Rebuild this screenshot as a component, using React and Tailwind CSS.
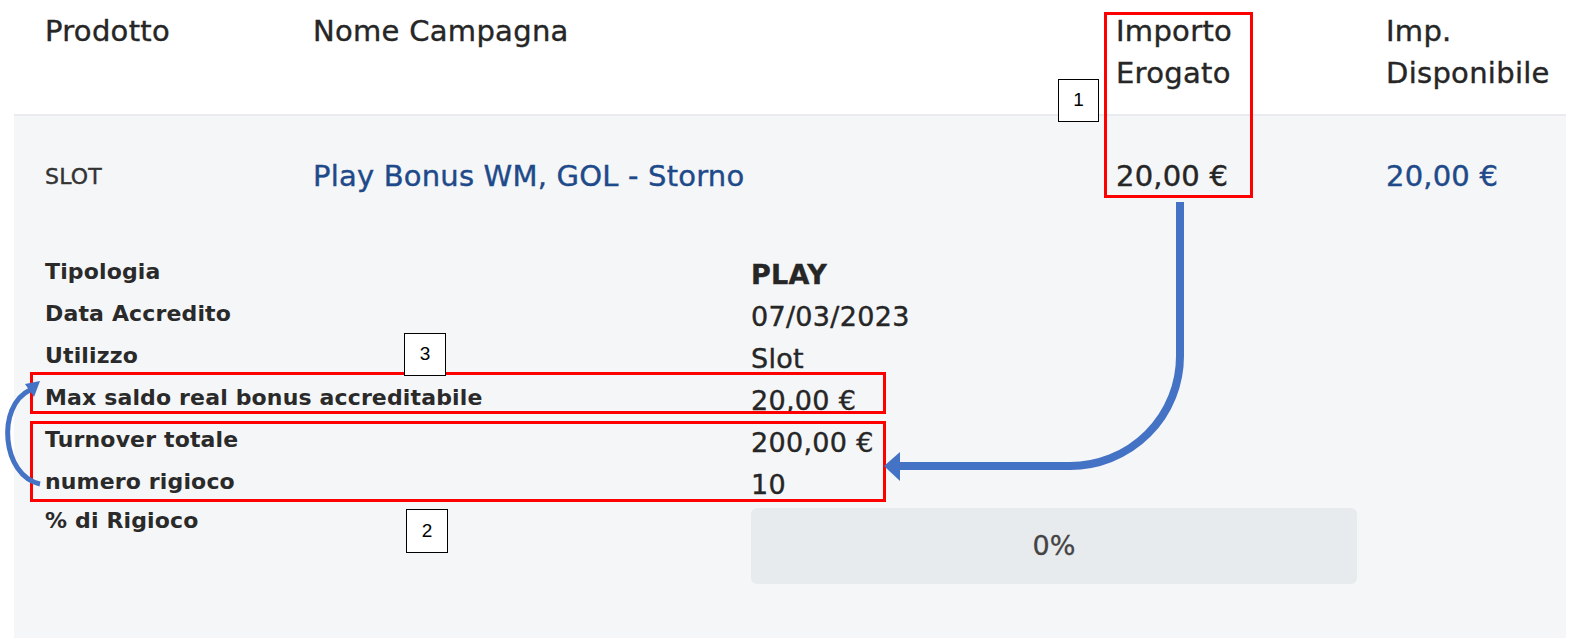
export default function App() {
  const font = { fontFamily: '"DejaVu Sans", "Liberation Sans", sans-serif' };
  const details = [
    ["Tipologia", "PLAY", true],
    ["Data Accredito", "07/03/2023", false],
    ["Utilizzo", "Slot", false],
    ["Max saldo real bonus accreditabile", "20,00 €", false],
    ["Turnover totale", "200,00 €", false],
    ["numero rigioco", "10", false],
  ];
  return (
    <div className="relative w-[1572px] h-[642px] bg-white overflow-hidden text-[#262626]" style={font}>
      {/* Header */}
      <div className="grid grid-cols-[268px_803px_268px_1fr] pl-[45px] pt-[10px] pb-[20px] text-[29px] leading-[42px] tracking-[0.3px] [-webkit-text-stroke:0.4px]">
        <div>Prodotto</div>
        <div>Nome Campagna</div>
        <div>
          Importo
          <br />
          Erogato
        </div>
        <div className="pl-[2px]">
          Imp.
          <br />
          Disponibile
        </div>
      </div>

      {/* Panel */}
      <div className="ml-[14px] mr-[6px] h-[524px] bg-[#f5f6f8] border-t-2 border-[#e9ebee] pl-[31px] pt-[39px]">
        <div className="grid grid-cols-[268px_803px_268px_1fr] items-center h-[42px] text-[29px] tracking-[0.2px] [-webkit-text-stroke:0.4px]">
          <div className="text-[22px] text-[#333]">SLOT</div>
          <div className="text-[#1e4a8a]">Play Bonus WM, GOL - Storno</div>
          <div className="text-[#262626]">20,00 €</div>
          <div className="text-[#1e4a8a] pl-[2px]">20,00 €</div>
        </div>

        <div className="mt-[53px] flex flex-col">
          {details.map(([label, value, bold]) => (
            <div key={label} className="grid grid-cols-[706px_1fr] h-[42px] items-center">
              <div className="text-[22px] font-bold text-[#2a2a2a] tracking-[0.15px] -mt-[2px]">{label}</div>
              <div className={`text-[27px] mt-[5px] tracking-[0.3px] [-webkit-text-stroke:0.4px] ${bold ? "font-bold" : ""}`}>{value}</div>
            </div>
          ))}
          <div className="grid grid-cols-[706px_1fr]">
            <div className="text-[22px] font-bold text-[#2a2a2a] tracking-[0.15px] leading-[42px] -mt-[2px]">% di Rigioco</div>
            <div className="pt-[6px]">
              <div className="w-[606px] h-[76px] rounded-md bg-[#e8ebee] flex items-center justify-center text-[27px] text-[#444] [-webkit-text-stroke:0.3px]">
                0%
              </div>
            </div>
          </div>
        </div>
      </div>

      {/* Annotations */}
      <div className="absolute left-[1104px] top-[12px] w-[149px] h-[186px] border-[3px] border-[#ff0000]" />
      <div className="absolute left-[30px] top-[372px] w-[856px] h-[42px] border-[3px] border-[#ff0000]" />
      <div className="absolute left-[30px] top-[421px] w-[856px] h-[81px] border-[3px] border-[#ff0000]" />

      <div className="absolute left-[1058px] top-[79px] w-[41px] h-[43px] border border-black bg-white flex items-center justify-center text-[19px] text-black" style={{ fontFamily: '"Liberation Sans", sans-serif' }}>1</div>
      <div className="absolute left-[404px] top-[333px] w-[42px] h-[43px] border border-black bg-white flex items-center justify-center text-[19px] text-black" style={{ fontFamily: '"Liberation Sans", sans-serif' }}>3</div>
      <div className="absolute left-[406px] top-[509px] w-[42px] h-[44px] border border-black bg-white flex items-center justify-center text-[19px] text-black" style={{ fontFamily: '"Liberation Sans", sans-serif' }}>2</div>

      <svg className="absolute left-0 top-0 pointer-events-none" width="1572" height="642" viewBox="0 0 1572 642">
        <path d="M1180 202 V356 A110 110 0 0 1 1070 466 H897" fill="none" stroke="#4472c4" strokeWidth="8" />
        <polygon points="884,466 900,452 900,481" fill="#4472c4" />
        <path d="M40 484 C 2 476, -4 406, 30 390" fill="none" stroke="#4472c4" strokeWidth="5" />
        <polygon points="40,381 25,384 34,397" fill="#4472c4" />
      </svg>
    </div>
  );
}
